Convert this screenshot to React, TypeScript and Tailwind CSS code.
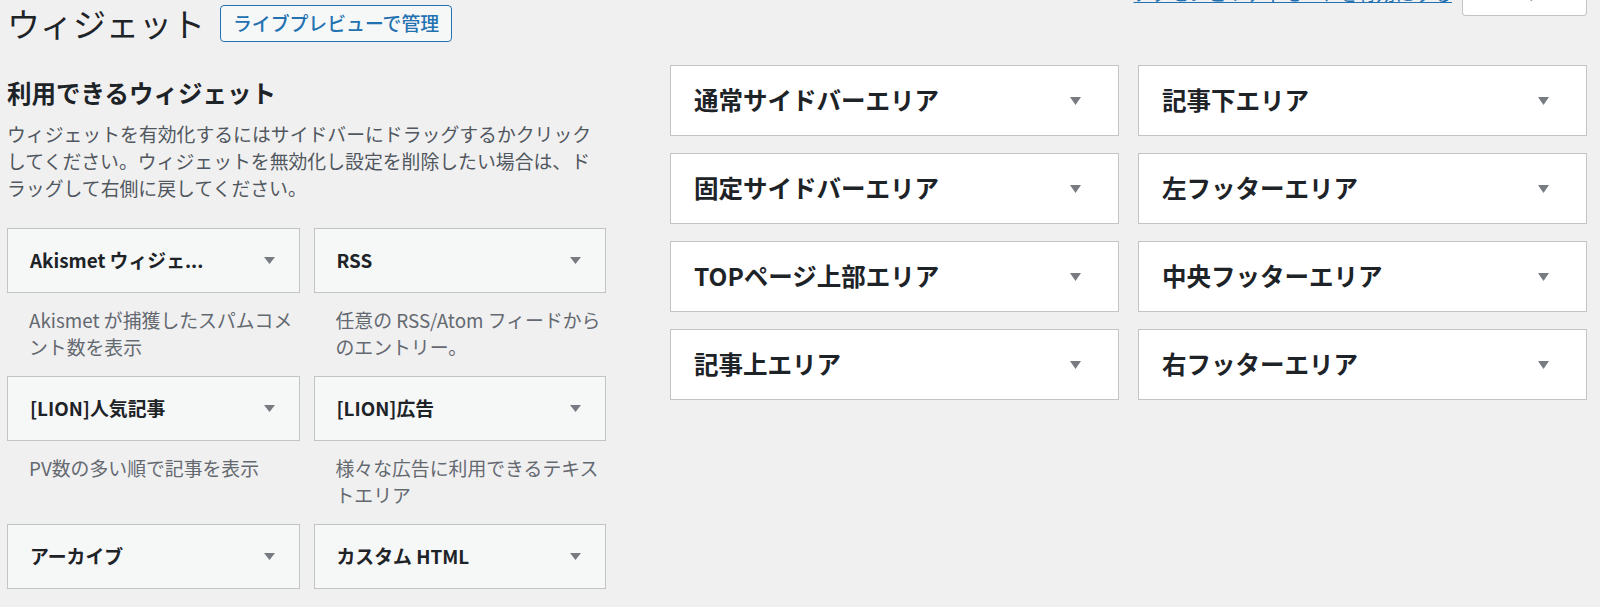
const available = [
  { title: 'Akismet ウィジェ...', desc: ['Akismet が捕獲したスパムコメ', 'ント数を表示'] },
  { title: 'RSS', desc: ['任意の RSS/Atom フィードから', 'のエントリー。'] },
  { title: '[LION]人気記事', desc: ['PV数の多い順で記事を表示'] },
  { title: '[LION]広告', desc: ['様々な広告に利用できるテキス', 'トエリア'] },
  { title: 'アーカイブ', desc: [] as string[] },
  { title: 'カスタム HTML', desc: [] as string[] },
];

const areas = [
  '通常サイドバーエリア',
  '記事下エリア',
  '固定サイドバーエリア',
  '左フッターエリア',
  'TOPページ上部エリア',
  '中央フッターエリア',
  '記事上エリア',
  '右フッターエリア',
];

function Arrow({ h = 7 }: { h?: number }) {
  return (
    <svg width="11" height={h} viewBox={`0 0 11 ${h}`} className="shrink-0">
      <path d={`M0 0H11L5.5 ${h}Z`} fill="#787c82" />
    </svg>
  );
}

export default function App() {
  return (
    <div className="min-h-screen bg-[#f0f0f1] pl-[7px] pr-[13px] font-['Noto_Sans_CJK_JP','Noto_Sans',sans-serif] text-[#1d2327]">
      {/* header */}
      <div className="flex items-start justify-between">
        <div className="flex items-center pt-[5px]">
          <h1 className="text-[33px] font-normal leading-[37px]">ウィジェット</h1>
          <a className="ml-[15px] flex h-[37px] items-center rounded-[4px] border border-[#2271b1] bg-[#f6f7f7] px-[12px] text-[18.85px] font-medium text-[#2271b1]">
            ライブプレビューで管理
          </a>
        </div>
        <div className="flex items-start">
          <a className="-mt-[21px] text-[18.85px] leading-[27px] text-[#2271b1] underline">
            アクセシビリティモードを有効にする
          </a>
          <button className="-mt-[28px] ml-[10px] flex h-[44px] w-[125px] items-start justify-center gap-[6px] rounded-b-[4px] border border-t-0 border-[#c3c4c7] bg-white pt-[6px] text-[18.85px] leading-[27px] text-[#50575e]">
            ヘルプ
            <span className="mt-[10px]">
              <Arrow h={6} />
            </span>
          </button>
        </div>
      </div>

      <div className="mt-[23px] flex items-start">
        {/* available widgets */}
        <div className="w-[599px] shrink-0">
          <h2 className="mt-[13px] text-[24.5px] font-semibold leading-[30px]">利用できるウィジェット</h2>
          <p className="mt-[12px] text-[18.85px] leading-[27px] text-[#50575e]">
            ウィジェットを有効化するにはサイドバーにドラッグするかクリック
            <br />
            してください。ウィジェットを無効化し設定を削除したい場合は、ド
            <br />
            ラッグして右側に戻してください。
          </p>
          <div className="mt-[27px] grid grid-cols-2 gap-x-[14px]">
            {available.map((w) => (
              <div key={w.title}>
                <div className="flex h-[65px] items-center justify-between border border-[#c3c4c7] bg-[#f6f7f7] pl-[22px] pr-[24px]">
                  <span className="text-[18.85px] font-semibold leading-none">{w.title}</span>
                  <Arrow />
                </div>
                <div className="h-[83px] pl-[22px] pt-[13px] text-[18.85px] leading-[27px] text-[#646970]">
                  {w.desc.map((line) => (
                    <div key={line}>{line}</div>
                  ))}
                </div>
              </div>
            ))}
          </div>
        </div>

        {/* sidebar areas */}
        <div className="ml-[64px] grid flex-1 grid-cols-2 gap-x-[19px] gap-y-[17px]">
          {areas.map((name) => (
            <div
              key={name}
              className="flex h-[71px] items-center justify-between border border-[#c3c4c7] bg-white pl-[23px] pr-[37px]"
            >
              <span className="text-[24.5px] font-semibold leading-none">{name}</span>
              <Arrow h={8} />
            </div>
          ))}
        </div>
      </div>
    </div>
  );
}
